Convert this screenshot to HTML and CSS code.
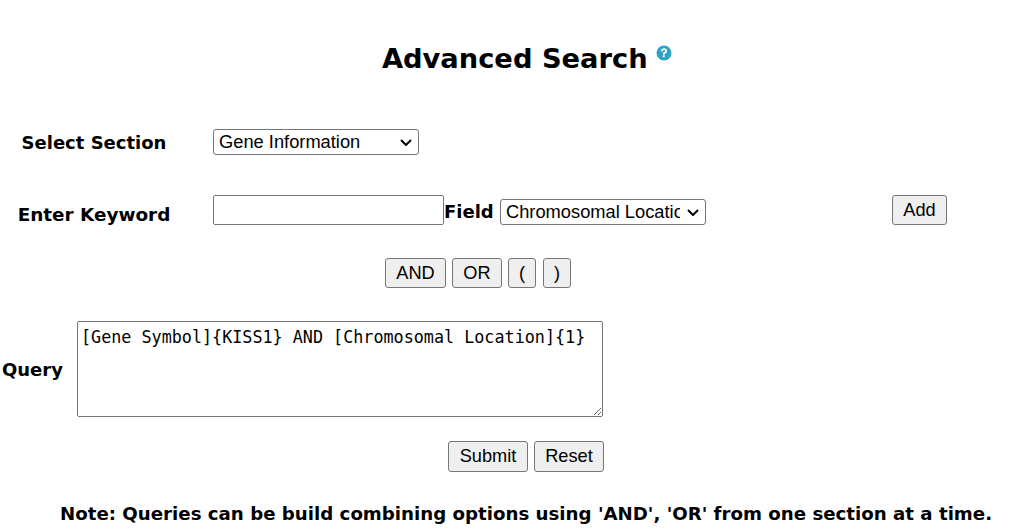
FILE: index.html
```html
<!DOCTYPE html>
<html lang="en">
<head>
  <meta charset="UTF-8">
  <title>Advanced Search</title>
  <link rel="stylesheet" href="styles.css">
</head>
<body>
  <h1 class="heading">Advanced Search
    <svg class="help" width="16" height="16" viewBox="0 0 16 16">
      <circle cx="8" cy="8" r="7.5" fill="#2aa3c7"/>
      <path d="M4.900 6.200C5 4.400 6.300 3.300 8 3.300c1.800 0 3.100 1.100 3.100 2.700 0 1.200-.7 1.800-1.500 2.300-.6.400-.8.700-.8 1.200H6.800c0-1.200.4-1.800 1.300-2.400.6-.4 1-.7 1-1.200 0-.5-.4-.9-1.100-.9-.7 0-1.100.4-1.200 1.200z" fill="#fff"/>
      <rect x="6.800" y="10.300" width="2" height="2" rx=".3" fill="#fff"/>
    </svg>
  </h1>

  <div class="row section-row">
    <label class="label section-label">Select Section</label>
    <select class="select">
      <option>Gene Information</option>
    </select>
  </div>

  <div class="row keyword-row">
    <label class="label keyword-label">Enter Keyword</label>
    <input type="text" class="keyword">
    <label class="field-label">Field</label>
    <select class="select">
      <option>Chromosomal Location</option>
    </select>
    <button class="btn add">Add</button>
  </div>

  <div class="operators">
    <button class="btn op-and">AND</button>
    <button class="btn op-or">OR</button>
    <button class="btn op-paren">(</button>
    <button class="btn op-paren">)</button>
  </div>

  <div class="query-row">
    <label class="query-label">Query</label>
    <textarea class="query">[Gene Symbol]{KISS1} AND [Chromosomal Location]{1}</textarea>
  </div>

  <div class="actions">
    <button class="btn submit">Submit</button>
    <button class="btn reset">Reset</button>
  </div>

  <p class="note">Note: Queries can be build combining options using 'AND', 'OR' from one section at a time.</p>
</body>
</html>
```

FILE: styles.css
```css
body {
  margin: 0;
  height: 529px;
  overflow: hidden;
  background: #fff;
  color: #000;
  font-family: "DejaVu Sans", Verdana, sans-serif;
}
.heading {
  margin: 0;
  padding-top: 42px;
  height: 88px;
  box-sizing: border-box;
  padding-left: 40px;
  text-align: center;
  font-size: 27.300px;
  line-height: 34px;
  font-weight: bold;
}
.help {
  vertical-align: 7px;
  margin-left: -1px;
}
.row {
  display: flex;
  align-items: flex-end;
}
.section-row {
  margin-top: 41px;
}
.keyword-row {
  margin-top: 40px;
}
.label {
  width: 188px;
  margin-right: 25px;
  text-align: center;
  font-weight: bold;
}
.section-label {
  font-size: 18px;
  line-height: 24px;
}
.keyword-label {
  font-size: 18.400px;
  line-height: 20px;
}
.select {
  width: 206px;
  height: 26px;
  box-sizing: border-box;
  padding: 0 25px 2px 5px;
  border: 1px solid #767676;
  border-radius: 3px;
  appearance: none;
  background: #fff url("data:image/svg+xml,%3Csvg xmlns='http://www.w3.org/2000/svg' width='12' height='7'%3E%3Cpath d='M1 1l5 5 5-5' fill='none' stroke='%23000' stroke-width='2'/%3E%3C/svg%3E") no-repeat right 6px center;
  color: #000;
  font-family: "Liberation Sans", Arial, sans-serif;
  font-size: 18.300px;
}
.keyword {
  width: 231px;
  height: 30px;
  box-sizing: border-box;
  border: 1px solid #767676;
  border-radius: 2px;
  padding: 1px 2px;
}
.field-label {
  width: 56px;
  font-size: 18px;
  font-weight: bold;
  line-height: 26px;
}
.btn {
  height: 30px;
  box-sizing: border-box;
  padding: 0;
  border: 1px solid #767676;
  border-radius: 3px;
  background: #efefef;
  color: #000;
  font-family: "Liberation Sans", Arial, sans-serif;
  font-size: 18.200px;
}
.add {
  width: 55px;
  margin-left: 186px;
}
.operators {
  display: flex;
  gap: 6px;
  margin-top: 33px;
  padding-left: 385px;
}
.op-and {
  width: 61px;
}
.op-or {
  width: 50px;
}
.op-paren {
  width: 28px;
}
.op-paren + .op-paren {
  margin-left: 1px;
}
.query-row {
  display: flex;
  align-items: center;
  margin-top: 33px;
}
.query-label {
  width: 77px;
  padding: 1px 0 0 2px;
  box-sizing: border-box;
  font-size: 18px;
  font-weight: bold;
}
.query {
  width: 526px;
  height: 96px;
  box-sizing: border-box;
  margin: 0;
  padding: 3px 3px;
  border: 1px solid #767676;
  border-radius: 2px;
  font-family: "DejaVu Sans Mono", Consolas, monospace;
  font-size: 16.750px;
  line-height: 25px;
}
.actions {
  display: flex;
  gap: 6px;
  margin-top: 24px;
  padding-left: 448px;
}
.submit {
  width: 80px;
  height: 31px;
}
.reset {
  width: 70px;
  height: 31px;
}
.note {
  margin: 31px 0 0;
  padding-left: 60px;
  font-size: 18.200px;
  font-weight: bold;
  line-height: 22px;
  white-space: nowrap;
}
```
